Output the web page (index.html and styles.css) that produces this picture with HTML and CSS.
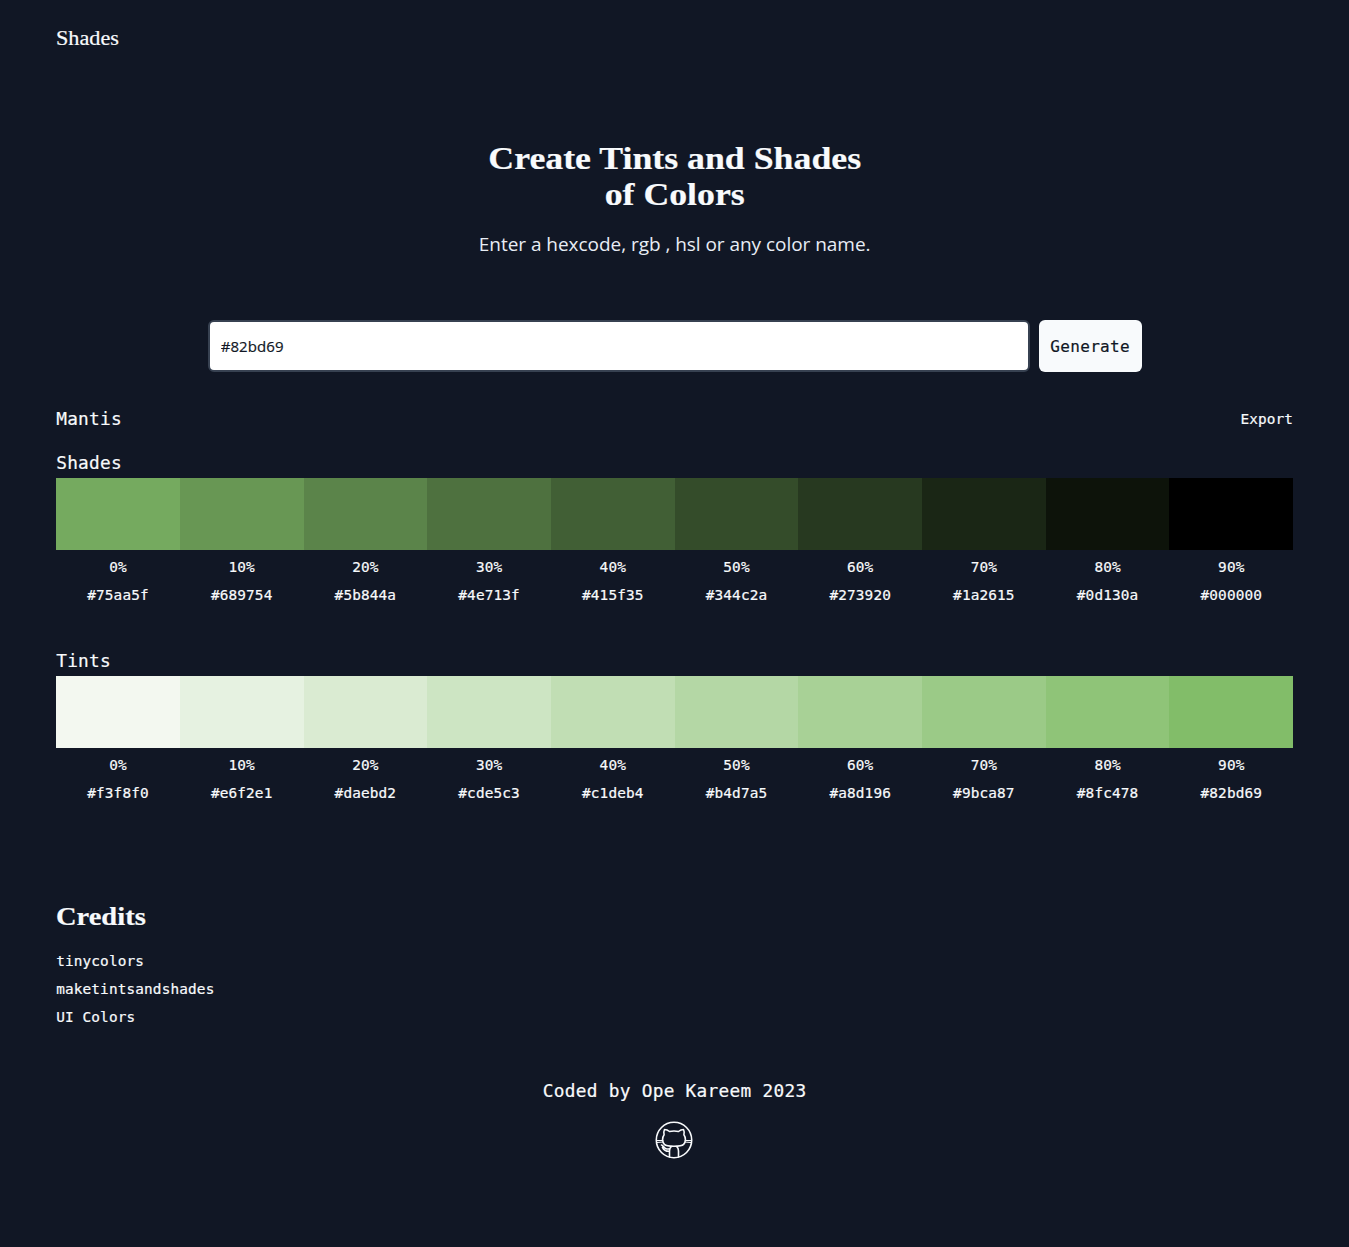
FILE: index.html
```html
<!DOCTYPE html>
<html lang="en">
<head>
<meta charset="utf-8">
<title>Shades</title>
<link rel="stylesheet" href="styles.css">
</head>
<body>
<header class="site-header"><a class="brand">Shades</a></header>
<main>
  <section class="hero">
    <h1>Create Tints and Shades<br>of Colors</h1>
    <p>Enter a hexcode, rgb , hsl or any color name.</p>
  </section>
  <form class="picker">
    <input class="color-input" type="text" value="#82bd69" aria-label="Color">
    <button class="generate" type="button">Generate</button>
  </form>
  <div class="result-bar"><h2 class="label">Mantis</h2><a>Export</a></div>
  <section class="palette">
    <h2 class="label">Shades</h2>
    <div class="swatches">
      <div class="swatch"><i style="background:#75aa5f"></i><span>0%</span><span>#75aa5f</span></div>
      <div class="swatch"><i style="background:#689754"></i><span>10%</span><span>#689754</span></div>
      <div class="swatch"><i style="background:#5b844a"></i><span>20%</span><span>#5b844a</span></div>
      <div class="swatch"><i style="background:#4e713f"></i><span>30%</span><span>#4e713f</span></div>
      <div class="swatch"><i style="background:#415f35"></i><span>40%</span><span>#415f35</span></div>
      <div class="swatch"><i style="background:#344c2a"></i><span>50%</span><span>#344c2a</span></div>
      <div class="swatch"><i style="background:#273920"></i><span>60%</span><span>#273920</span></div>
      <div class="swatch"><i style="background:#1a2615"></i><span>70%</span><span>#1a2615</span></div>
      <div class="swatch"><i style="background:#0d130a"></i><span>80%</span><span>#0d130a</span></div>
      <div class="swatch"><i style="background:#000000"></i><span>90%</span><span>#000000</span></div>
    </div>
  </section>
  <section class="palette">
    <h2 class="label">Tints</h2>
    <div class="swatches">
      <div class="swatch"><i style="background:#f3f8f0"></i><span>0%</span><span>#f3f8f0</span></div>
      <div class="swatch"><i style="background:#e6f2e1"></i><span>10%</span><span>#e6f2e1</span></div>
      <div class="swatch"><i style="background:#daebd2"></i><span>20%</span><span>#daebd2</span></div>
      <div class="swatch"><i style="background:#cde5c3"></i><span>30%</span><span>#cde5c3</span></div>
      <div class="swatch"><i style="background:#c1deb4"></i><span>40%</span><span>#c1deb4</span></div>
      <div class="swatch"><i style="background:#b4d7a5"></i><span>50%</span><span>#b4d7a5</span></div>
      <div class="swatch"><i style="background:#a8d196"></i><span>60%</span><span>#a8d196</span></div>
      <div class="swatch"><i style="background:#9bca87"></i><span>70%</span><span>#9bca87</span></div>
      <div class="swatch"><i style="background:#8fc478"></i><span>80%</span><span>#8fc478</span></div>
      <div class="swatch"><i style="background:#82bd69"></i><span>90%</span><span>#82bd69</span></div>
    </div>
  </section>
  <section class="credits">
    <h2>Credits</h2>
    <ul><li>tinycolors</li><li>maketintsandshades</li><li>UI Colors</li></ul>
  </section>
</main>
<footer>
  <p class="label">Coded by Ope Kareem 2023</p>
  <svg class="github" viewBox="0 0 40 40" width="40" height="40" fill="none" stroke="currentColor" stroke-width="1.6" stroke-linejoin="round" stroke-linecap="round">
    <circle cx="20" cy="20" r="17.7"/>
    <path d="M10.5 9.5c1.900.1 3.500.8 5 2 2.900-.6 6.100-.6 9 0 1.500-1.200 3.100-1.900 5-2 .8 1.700.9 3.500.4 5.200 2.200 3 2 7.200-.3 9.700-2.400 2.400-16.800 2.400-19.200 0-2.300-2.500-2.500-6.700-.3-9.700-.5-1.700-.4-3.500.4-5.200z"/>
    <path d="M15.500 37v-6c0-2 .5-3.500 1.800-4.400M24.500 37v-6c0-2-.5-3.500-1.800-4.400"/>
    <path d="M7.500 25c2 .4 2.600 3.100 4.500 3.700 1 .4 2.200.4 3.300.1M8.500 27.300c1 2.200 2.200 4.100 6.500 4"/>
    <path stroke-width="1.100" d="M2.500 20.500h6.300M3 22.500l6-.5M31.200 20.500h6.300M31 22l6 .5"/>
  </svg>
</footer>
</body>
</html>
```
FILE: styles.css
```css
* { box-sizing: border-box; margin: 0; padding: 0; }
body { min-height: 1247px; padding: 0 55.85px 0 56.15px; background: #111725; color: #f8fafc; font: 14.4px/28px "DejaVu Sans Mono", monospace; letter-spacing: .13px; -webkit-text-stroke: .2px; }
.site-header { height: 76px; display: flex; align-items: center; }
.brand { font: 20px/28px "Liberation Serif", serif; letter-spacing: 0; transform: scaleX(1.11); transform-origin: left; }
.hero { padding-top: 64px; height: 244px; text-align: center; }
.hero h1 { width: fit-content; margin: 0 auto; font: bold 32px/36px "Liberation Serif", serif; letter-spacing: 0; transform: scaleX(1.118); }
.hero p { margin-top: 18px; font: 19px/28px "Open Sans", sans-serif; letter-spacing: -.04px; color: #e8edf5; -webkit-text-stroke: 0; }
.picker { width: 934px; height: 52px; margin: 0 auto; display: flex; gap: 9px; }
.color-input { flex: 1; min-width: 0; padding: 0 11px 1px; border: 2px solid #374151; border-radius: 6px; background: #fff; color: #111725; font: 15px "Open Sans", sans-serif; letter-spacing: .1px; }
.generate { width: 103px; border: 0; border-radius: 6px; background: #f8fafc; color: #111725; font: 16px "DejaVu Sans Mono", monospace; letter-spacing: .35px; }
.label { font-size: 17.8px; line-height: 28px; font-weight: 400; letter-spacing: .28px; }
.result-bar { margin-top: 33px; height: 28px; display: flex; justify-content: space-between; }
.palette { margin-top: 16px; height: 156px; }
.result-bar + .palette { margin-bottom: 42px; }
.swatches { display: grid; grid-template-columns: repeat(10, 1fr); margin-top: 1px; }
.swatch { display: grid; grid-template-rows: 75px 28px 28px; text-align: center; }
.swatch i { height: 72px; }
.credits { margin-top: 98px; }
.credits h2 { width: fit-content; font: bold 25px/32px "Liberation Serif", serif; letter-spacing: 0; transform: scaleX(1.14); transform-origin: left; }
.credits ul { margin-top: 14px; list-style: none; }
footer { margin-top: 46px; display: flex; flex-direction: column; align-items: center; }
.github { margin: 15px 1px 0 0; }
```
